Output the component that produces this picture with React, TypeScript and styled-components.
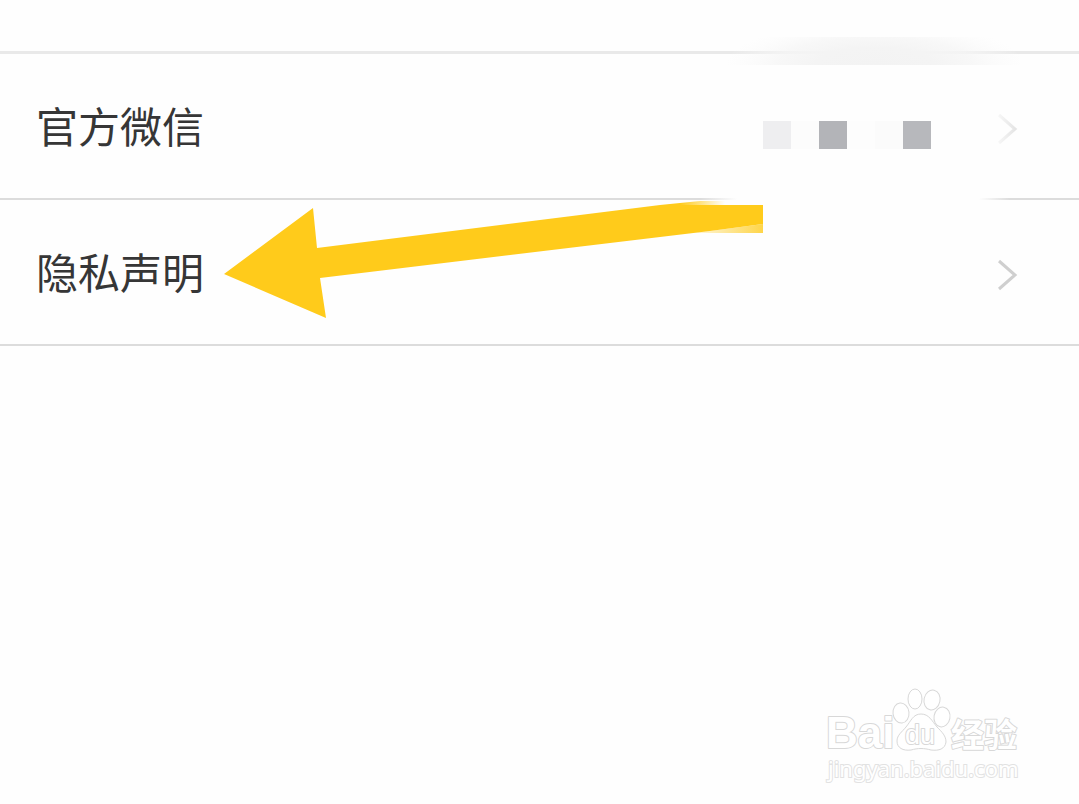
import React from "react";
import styled, { createGlobalStyle } from "styled-components";

const Global = createGlobalStyle`
  * { box-sizing: border-box; }
  body {
    margin: 0;
    background: #fefefe;
    color: #363636;
    font-family: "Noto Sans CJK SC", "Noto Sans", sans-serif;
  }
`;

const Page = styled.main`
  position: relative;
  display: flex;
  flex-direction: column;
  min-height: 100vh;
  overflow: hidden;
`;

const List = styled.ul`
  margin: 51px 0 0;
  padding: 0;
  list-style: none;
  border-top: 3px solid #e9e9e9;
`;

const Item = styled.li`
  border-bottom: 2px solid #dcdcdc;
`;

const Row = styled.a`
  display: flex;
  align-items: center;
  height: 144px;
  padding: 6px 59px 0 36px;
  color: inherit;
  text-decoration: none;
`;

const Label = styled.span`
  flex: 1;
  padding-bottom: 8px;
  font-size: 42px;
  line-height: 60px;
`;

const Mosaic = styled.span`
  display: flex;
  margin: 12px 65px 0 0;
`;

const Tile = styled.span<{ $tone: string }>`
  width: 28px;
  height: 28px;
  background: ${(p) => p.$tone};
`;

const Chevron = styled.svg<{ $faded?: boolean }>`
  width: 24px;
  height: 36px;
  fill: none;
  stroke: ${(p) => (p.$faded ? "url(#chevron-fade)" : "#cfcfcf")};
  stroke-width: 3;
`;

const Smudge = styled.svg`
  position: absolute;
  top: 36px;
  right: 59px;
  width: 330px;
  height: 170px;
  pointer-events: none;
`;

const Arrow = styled.svg`
  position: absolute;
  top: 198px;
  left: 220px;
  width: 550px;
  height: 124px;
  pointer-events: none;
`;

const Watermark = styled.div`
  position: absolute;
  right: 54px;
  bottom: 20px;
  display: flex;
  flex-direction: column;
  width: 200px;
  color: #ffffff;
`;

const Logo = styled.svg`
  width: 200px;
  height: 64px;
  fill: #ffffff;
  stroke: #d8d8d8;
  stroke-width: 1;
  overflow: visible;
`;

const LogoText = styled.text<{ $light?: boolean }>`
  font-family: "Liberation Sans", "Noto Sans CJK SC", sans-serif;
  font-weight: ${(p) => (p.$light ? 400 : 700)};
  paint-order: stroke;
  stroke-width: 2;
  stroke-linejoin: round;
`;

const Site = styled.span`
  padding-left: 3px;
  font-family: "Noto Sans", "Open Sans", sans-serif;
  font-size: 22px;
  line-height: 32px;
  white-space: nowrap;
  paint-order: stroke;
  -webkit-text-stroke: 2px #e2e2e2;
`;

const tiles = ["#eeeef0", "#fcfcfc", "#b3b4b8", "#fdfdfd", "#fbfbfb", "#b7b8bc"];

function ChevronRight({ faded }: { faded?: boolean }) {
  return (
    <Chevron viewBox="0 0 24 36" $faded={faded} aria-hidden="true">
      {faded && (
        <linearGradient id="chevron-fade" gradientUnits="userSpaceOnUse" x1="1" y1="0" x2="20" y2="0">
          <stop offset="0" stopColor="#f8f8f8" />
          <stop offset="1" stopColor="#e4e4e4" />
        </linearGradient>
      )}
      <path d="M3 4 L19 18 L3 32" />
    </Chevron>
  );
}

export default function App() {
  return (
    <>
      <Global />
      <Page>
        <List>
          <Item>
            <Row href="#wechat">
              <Label>官方微信</Label>
              <Mosaic aria-hidden="true">
                {tiles.map((tone) => (
                  <Tile key={tone} $tone={tone} />
                ))}
              </Mosaic>
              <ChevronRight faded />
            </Row>
          </Item>
          <Item>
            <Row href="#privacy">
              <Label>隐私声明</Label>
              <ChevronRight />
            </Row>
          </Item>
        </List>

        <Smudge viewBox="0 0 330 170" aria-hidden="true">
          <defs>
            <radialGradient
              id="haze"
              gradientUnits="userSpaceOnUse"
              cx="0"
              cy="0"
              r="1"
              gradientTransform="translate(185 29) scale(150 44)"
            >
              <stop offset="0" stopColor="#f3f3f3" />
              <stop offset="0.4" stopColor="#f4f4f4" />
              <stop offset="0.65" stopColor="#f6f6f6" stopOpacity="0.8" />
              <stop offset="1" stopColor="#fafafa" stopOpacity="0" />
            </radialGradient>
            <linearGradient id="wipe" gradientUnits="userSpaceOnUse" x1="10" y1="0" x2="320" y2="0">
              <stop offset="0" stopColor="#fefefe" stopOpacity="0" />
              <stop offset="0.12" stopColor="#fefefe" />
              <stop offset="0.9" stopColor="#fefefe" />
              <stop offset="1" stopColor="#fefefe" stopOpacity="0" />
            </linearGradient>
          </defs>
          <rect x="10" y="1" width="320" height="28" fill="url(#haze)" />
          <rect x="10" y="160" width="310" height="6" fill="url(#wipe)" />
        </Smudge>

        <Arrow viewBox="0 0 550 124" aria-hidden="true">
          <defs>
            <linearGradient id="tail" gradientUnits="userSpaceOnUse" x1="470" y1="0" x2="543" y2="0">
              <stop offset="0" stopColor="#ffcb1b" stopOpacity="0.1" />
              <stop offset="1" stopColor="#ffcb1b" stopOpacity="0.8" />
            </linearGradient>
            <linearGradient id="crest" gradientUnits="userSpaceOnUse" x1="460" y1="0" x2="505" y2="0">
              <stop offset="0" stopColor="#ffcb1b" />
              <stop offset="1" stopColor="#ffcb1b" stopOpacity="0" />
            </linearGradient>
          </defs>
          <path d="M4 76 L93 10 L97 50 L440 7 H543 V26 L490 33 L100 80 L106 120 Z" fill="#ffcb1b" />
          <path d="M440 7 L480 3 H505 V7 Z" fill="url(#crest)" />
          <path d="M490 33 L543 26 V35 H470 Z" fill="url(#tail)" />
        </Arrow>

        <Watermark>
          <Logo viewBox="0 0 200 64" role="img" aria-label="Baidu">
            <LogoText x="1" y="60" fontSize="44">Bai</LogoText>
            <ellipse cx="76" cy="25" rx="8" ry="10" transform="rotate(-6 76 25)" />
            <ellipse cx="90" cy="11" rx="7" ry="10" />
            <ellipse cx="107" cy="12" rx="8" ry="10" transform="rotate(12 107 12)" />
            <ellipse cx="117" cy="29" rx="8" ry="10" transform="rotate(10 117 29)" />
            <path d="M96 26 C104 26 107 33 112 39 C117 44 121 48 121 54 C120 61 114 63 106 62 C99 60 93 60 86 62 C78 63 72 60 72 53 C72 47 77 44 81 39 C86 33 88 26 96 26 Z" />
            <LogoText $light x="80" y="56" fontSize="27">du</LogoText>
            <LogoText x="126" y="59" fontSize="33">经验</LogoText>
          </Logo>
          <Site>jingyan.baidu.com</Site>
        </Watermark>
      </Page>
    </>
  );
}
